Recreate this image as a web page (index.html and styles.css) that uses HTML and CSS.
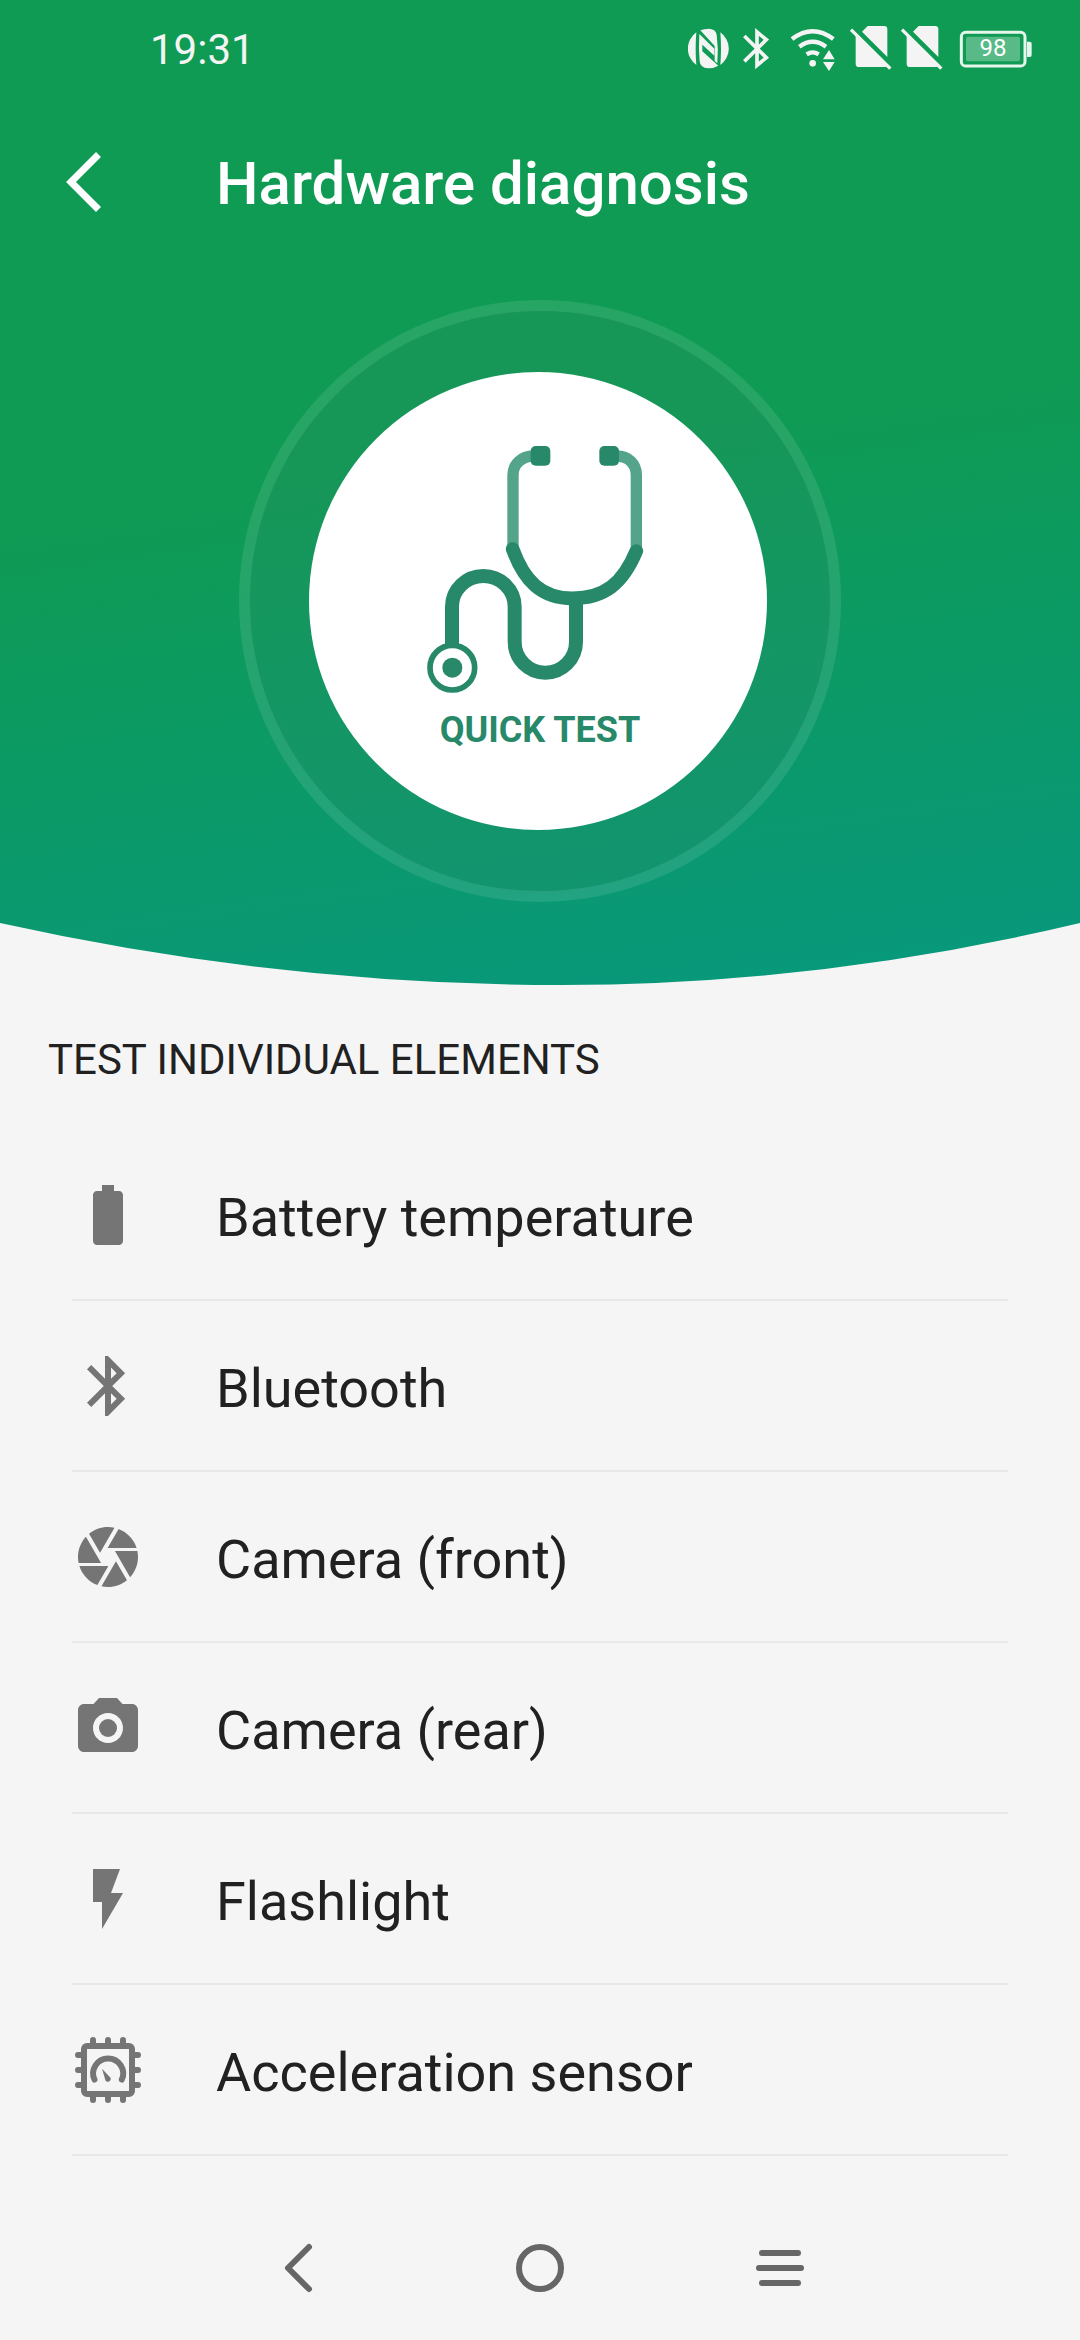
FILE: index.html
```html
<!DOCTYPE html>
<html lang="en">
<head>
<meta charset="utf-8">
<meta name="viewport" content="width=device-width, initial-scale=1">
<title>Hardware diagnosis</title>
<link rel="stylesheet" href="styles.css">
</head>
<body>
<header class="hero">
  <svg class="hero-bg" viewBox="0 0 1080 985" preserveAspectRatio="none" aria-hidden="true">
    <defs>
      <linearGradient id="sky" gradientUnits="userSpaceOnUse" x1="500" y1="450" x2="580" y2="1000">
        <stop offset="0" stop-color="#0f9b53"/>
        <stop offset="1" stop-color="#08987a"/>
      </linearGradient>
    </defs>
    <path fill="url(#sky)" d="M0 0H1080V923Q820 985 561 985Q280 985 0 923Z"/>
  </svg>
  <div class="status-bar">
    <time class="clock">19:31</time>
    <div class="status-icons">
      <svg class="nfc" width="41" height="48" viewBox="84 72 123 144" fill="#f4f4f4" aria-hidden="true">
        <path d="M109 97A60 60 0 0 0 109 195Q105 146 109 97Z"/>
        <path d="M181 97A60 60 0 0 1 181 195Q185 146 181 97Z"/>
        <path d="M121 91Q133 86 148 86Q168 88 170 104Q176 146 172 190L164 183V138Z"/>
        <path d="M118 102L163 146V167L127 134V154L175 197Q162 205 144 205Q121 204 119 184Q115 146 118 102Z"/>
      </svg>
      <svg class="bt" width="28" height="48" viewBox="246 72 84 144" fill="none" stroke="#f4f4f4" stroke-width="11" aria-hidden="true">
        <path d="M253 108L319 173L291 196V96L319 119L253 184"/>
      </svg>
      <svg class="wifi" width="46" height="48" viewBox="390 72 138 144" fill="none" stroke="#f4f4f4" stroke-width="13" aria-hidden="true">
        <path d="M396 117Q458 70 520 117M418 140Q458 111 498 140M440 163Q458 151 476 163"/>
        <g fill="#f4f4f4" stroke="none"><circle cx="458" cy="190" r="10"/><path d="M507 150L524 178H489ZM507 213L524 186H489Z"/></g>
      </svg>
      <svg class="sim" width="44" height="48" viewBox="567 72 132 144" fill="#f4f4f4" aria-hidden="true">
        <path d="M606 95L623 78H673Q682 78 682 87V171ZM587 102L683 198Q680 201 674 201H597Q587 201 587 191Z"/>
        <path d="M573 89L691 206" stroke="#f4f4f4" stroke-width="10"/>
      </svg>
      <svg class="sim2" width="44" height="48" viewBox="567 72 132 144" fill="#f4f4f4" aria-hidden="true">
        <path d="M606 95L623 78H673Q682 78 682 87V171ZM587 102L683 198Q680 201 674 201H597Q587 201 587 191Z"/>
        <path d="M573 89L691 206" stroke="#f4f4f4" stroke-width="10"/>
      </svg>
      <div class="battery">
        <svg width="74" height="48" viewBox="897 72 222 144" aria-hidden="true">
          <rect x="904" y="97" width="191" height="101" rx="13" fill="none" stroke="#e6f6ed" stroke-width="9"/>
          <rect x="918" y="110" width="162" height="74" rx="6" fill="#57ba87"/>
          <path d="M1101 125H1109Q1115 125 1115 131V165Q1115 171 1109 171H1101Z" fill="#e6f6ed"/>
        </svg>
        <span class="level">98</span>
      </div>
    </div>
  </div>
  <div class="app-bar">
    <button class="back" type="button" aria-label="Back">
      <svg width="48" height="72" viewBox="60 146 48 72" fill="none" stroke="#fff" stroke-width="7" aria-hidden="true"><path d="M98.500 154.500L71 182L98.500 209.500"/></svg>
    </button>
    <h1>Hardware diagnosis</h1>
  </div>
  <button class="quick-test" type="button">
    <svg width="602" height="602" viewBox="0 0 602 602" aria-hidden="true">
      <circle cx="301" cy="301" r="291" fill="#2a8a68" fill-opacity=".25"/>
      <circle cx="301" cy="301" r="295.500" fill="none" stroke="#fff" stroke-opacity=".1" stroke-width="11"/>
      <circle cx="299" cy="301" r="229" fill="#fff"/>
      <g transform="translate(161 120) scale(.33333)" fill="none" stroke="#278969">
        <g stroke="#53a48a" stroke-width="34">
          <path d="M400 108C366 108 339 132 339 165V385"/>
          <path d="M650 108C685 108 709 132 709 165V385"/>
        </g>
        <g fill="#278969" stroke="none">
          <rect x="392" y="78" width="59" height="59" rx="15"/>
          <rect x="598" y="78" width="59" height="59" rx="15"/>
          <circle cx="157" cy="743" r="30"/>
        </g>
        <path stroke-width="41" stroke-linecap="round" d="M338 387C372 482 424 535 518 535C612 535 668 492 709 393"/>
        <path stroke-width="42" d="M528 535V665A92 93 0 0 1 344 665V560A94 92 0 0 0 156 560V678"/>
        <circle cx="157" cy="743" r="67" stroke-width="17"/>
      </g>
    </svg>
    <span>QUICK TEST</span>
  </button>
</header>
<main>
  <h2>TEST INDIVIDUAL ELEMENTS</h2>
  <ul class="tests">
    <li><a href="#battery"><svg viewBox="0 0 24 24" aria-hidden="true"><path d="M15.670 4H14V2h-4v2H8.330C7.600 4 7 4.600 7 5.330v15.330C7 21.400 7.600 22 8.330 22h7.330c.740 0 1.340-.600 1.340-1.330V5.330C17 4.600 16.400 4 15.670 4z"/></svg><span>Battery temperature</span></a></li>
    <li><a href="#bluetooth"><svg viewBox="0 0 24 24" aria-hidden="true"><path d="M17.710 7.710L12 2h-1v7.590L6.410 5 5 6.410 10.590 12 5 17.590 6.410 19 11 14.410V22h1l5.710-5.710-4.300-4.290 4.300-4.290zM13 5.830l1.880 1.880L13 9.590V5.830zm1.880 10.460L13 18.170v-3.760l1.880 1.880z"/></svg><span>Bluetooth</span></a></li>
    <li><a href="#camera-front"><svg viewBox="0 0 24 24" aria-hidden="true"><path d="M9.400 10.500l4.770-8.260C13.470 2.090 12.750 2 12 2c-2.400 0-4.600.850-6.320 2.250l3.660 6.350.060-.100zM21.540 9c-.920-2.920-3.150-5.260-6-6.340L11.880 9h9.660zm.260 1h-7.490l.290.500 4.760 8.250C21 16.970 22 14.610 22 12c0-.690-.070-1.350-.200-2zM8.540 12l-3.900-6.750C3.010 7.030 2 9.390 2 12c0 .690.070 1.350.200 2h7.490l-1.150-2zm-6.080 3c.920 2.920 3.150 5.260 6 6.340L12.120 15H2.460zm11.270 0l-3.900 6.760c.700.150 1.420.240 2.170.240 2.400 0 4.600-.850 6.320-2.250l-3.660-6.350-.930 1.600z"/></svg><span>Camera (front)</span></a></li>
    <li><a href="#camera-rear"><svg viewBox="0 0 24 24" aria-hidden="true"><circle cx="12" cy="12" r="3"/><path fill-rule="evenodd" d="M9 2L7.170 4H4c-1.100 0-2 .900-2 2v12c0 1.100.900 2 2 2h16c1.100 0 2-.900 2-2V6c0-1.100-.900-2-2-2h-3.170L15 2H9zm3 15c-2.760 0-5-2.240-5-5s2.240-5 5-5 5 2.240 5 5-2.240 5-5 5z"/></svg><span>Camera (rear)</span></a></li>
    <li><a href="#flashlight"><svg viewBox="0 0 24 24" aria-hidden="true"><path d="M7 2v11h3v9l7-12h-4l3-8z"/></svg><span>Flashlight</span></a></li>
    <li><a href="#acceleration"><svg viewBox="0 0 24 24" aria-hidden="true"><g fill="none" stroke="#757575" stroke-width="2" stroke-linecap="round"><rect x="4" y="4" width="16" height="16" rx="1"/><path d="M7 4V2M12 4V2M17 4V2M7 20v2M12 20v2M17 20v2M4 7H2M4 12H2M4 17H2M20 7h2M20 12h2M20 17h2M7.500 15.200A5 5 0 1 1 16.600 15.200"/></g><path d="M10 11.600L12.900 14.700A1 1 0 0 1 11.200 15.600Z"/></svg><span>Acceleration sensor</span></a></li>
  </ul>
</main>
<nav class="nav-bar">
  <button type="button" aria-label="Back"><svg width="72" height="72" viewBox="0 0 72 72" aria-hidden="true"><path d="M45 15L24 36L45 57"/></svg></button>
  <button type="button" aria-label="Home"><svg width="72" height="72" viewBox="0 0 72 72" aria-hidden="true"><circle cx="36" cy="36" r="21"/></svg></button>
  <button type="button" aria-label="Recent apps"><svg width="72" height="72" viewBox="0 0 72 72" aria-hidden="true"><path d="M18 21H54M15 36H57M18 51H54"/></svg></button>
</nav>
</body>
</html>
```
FILE: styles.css
```css
* { box-sizing: border-box; }

body {
  margin: 0;
  min-height: 100vh;
  display: flex;
  flex-direction: column;
  background: #f5f5f5;
  color: #212121;
  font-family: Roboto, "Noto Sans", sans-serif;
}

svg { display: block; flex: none; }
h1, h2, ul { margin: 0; padding: 0; font-weight: 400; }
button { margin: 0; padding: 0; border: 0; background: none; font: inherit; cursor: pointer; }

.hero {
  position: relative;
  display: flex;
  flex-direction: column;
  padding-bottom: 83px;
  color: #fff;
}
.hero-bg {
  position: absolute;
  inset: 0;
  z-index: -1;
  width: 100%;
  height: 100%;
}

.status-bar {
  display: flex;
  align-items: center;
  justify-content: space-between;
  height: 96px;
  padding: 0 47px 0 150px;
}
.clock { padding-top: 4px; font-size: 42px; line-height: 48px; color: #f4f4f4; }
.status-icons { display: flex; align-items: center; }
.bt { margin-left: 13px; }
.wifi { margin-left: 20px; }
.sim { margin-left: 13px; }
.sim2 { margin-left: 7px; }
.battery { display: grid; margin-left: 15px; }
.battery > * { grid-area: 1 / 1; }
.level {
  padding-right: 6px;
  font-size: 24px;
  line-height: 48px;
  text-align: center;
}

.app-bar {
  display: flex;
  align-items: center;
  height: 172px;
  padding-left: 60px;
}
.back { width: 156px; }
h1 { padding-top: 4px; font-size: 60px; font-weight: 500; line-height: 72px; }

.quick-test {
  display: grid;
  align-self: center;
  margin-top: 32px;
  border-radius: 50%;
  color: #278969;
  font-size: 36px;
  font-weight: 700;
  line-height: 48px;
}
.quick-test > * { grid-area: 1 / 1; }
.quick-test span { align-self: end; margin-bottom: 148px; }

main { padding: 51px 72px 0; }
h2 { margin-left: -24px; font-size: 42px; line-height: 48px; }
.tests { margin-top: 46px; list-style: none; }
.tests a {
  display: flex;
  align-items: center;
  gap: 72px;
  height: 171px;
  border-bottom: 2px solid #e8e8e8;
  color: inherit;
  font-size: 54px;
  line-height: 72px;
  text-decoration: none;
}
.tests span { padding-top: 6px; }
.tests svg { width: 72px; height: 72px; fill: #757575; }

.nav-bar {
  display: flex;
  justify-content: center;
  gap: 168px;
  margin-top: auto;
  padding-bottom: 36px;
}
.nav-bar svg {
  fill: none;
  stroke: #666;
  stroke-width: 6;
  stroke-linecap: round;
  stroke-linejoin: round;
}
```
